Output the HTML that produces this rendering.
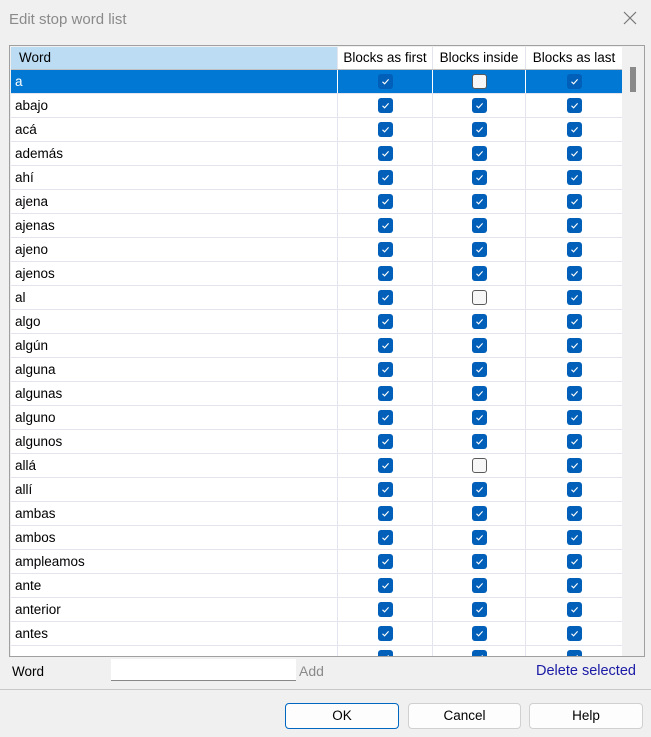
<!DOCTYPE html>
<html><head><meta charset="utf-8"><style>
*{margin:0;padding:0;box-sizing:border-box}
body{width:651px;height:737px;background:#f0f0f0;font-family:"Liberation Sans",sans-serif;font-size:13.5px;color:#000;position:relative;overflow:hidden}
.title{position:absolute;left:9px;top:11px;font-size:15px;color:#8a8a8a}
.close{position:absolute;left:622px;top:10px;width:16px;height:16px}
.frame{position:absolute;left:9px;top:45px;width:636px;height:612px;border:1px solid #a0a0a0;background:#f0f0f0;overflow:hidden}
.grid{position:absolute;left:1px;top:1px;width:611px;height:609px;background:#fff;overflow:hidden}
.row{position:absolute;left:0;width:611px;height:24px;border-bottom:1px solid #e4e4ee}
.row > div{position:absolute;top:0;height:23px;border-right:1px solid #e4e4ee}
.c0{left:0;width:327px;padding-left:4px;line-height:23px}
.c1{left:327px;width:95px}.c2{left:422px;width:93px}.c3{left:515px;width:96px;border-right:none!important}
.cb{position:absolute;left:50%;top:4px;margin-left:-7px;width:15px;height:15px;border-radius:3px;background:#005fb8;display:block}
.cb svg{position:absolute;left:2px;top:2px}
.un{background:#f7f7f7;border:1px solid #5a5a5a}
.hdr{position:absolute;left:0;top:0;width:611px;height:23px;border-bottom:1px solid #c0c0c0}
.hdr div{position:absolute;top:0;height:22px;line-height:22px;text-align:center;border-right:1px solid #e4e4ee;font-size:13.5px}
.sel{background:#0078d4;color:#fff}
.sel > div{border-right-color:#fff!important}
.sb{position:absolute;left:620px;top:21px;width:6px;height:25px;background:#8a8a8a}
.btn{position:absolute;top:703px;height:26px;border:1px solid #d0d0d0;border-radius:4px;background:#fdfdfd;text-align:center;line-height:24px}
</style></head><body>
<div class="title">Edit stop word list</div>
<svg class="close" viewBox="0 0 16 16"><path d="M2 2L14 14M14 2L2 14" stroke="#777" stroke-width="1.2"/></svg>
<div class="frame">
<div class="grid" id="g">
<div class="hdr"><div style="left:0;width:327px;background:#bcdcf4;text-align:left;padding-left:8px">Word</div><div style="left:327px;width:95px">Blocks as first</div><div style="left:422px;width:93px">Blocks inside</div><div style="left:515px;width:96px;border-right:none">Blocks as last</div></div>
</div>
<div class="sb"></div>
</div>
<div style="position:absolute;left:12px;top:664px">Word</div>
<div style="position:absolute;left:111px;top:659px;width:185px;height:22px;background:#fff;border-bottom:1px solid #888"></div>
<div style="position:absolute;left:299px;top:663px;color:#8a8a8a;font-size:14px">Add</div>
<div style="position:absolute;left:536px;top:663px;color:#1a1aa6;font-size:14.5px">Delete selected</div>
<div style="position:absolute;left:0;top:689px;width:651px;border-top:1px solid #c8c8c8"></div>
<div class="btn" style="left:285px;width:114px;border-color:#0067c0">OK</div>
<div class="btn" style="left:408px;width:113px">Cancel</div>
<div class="btn" style="left:529px;width:114px">Help</div>
<script>
var w=["a","abajo","acá","además","ahí","ajena","ajenas","ajeno","ajenos","al","algo","algún","alguna","algunas","alguno","algunos","allá","allí","ambas","ambos","ampleamos","ante","anterior","antes",""];
var un={0:1,9:1,16:1};
var ck='<svg width="11" height="11" viewBox="0 0 11 11"><path d="M2.5 5.8L4.6 7.8L8.6 3.4" fill="none" stroke="#fff" stroke-width="1.1"/></svg>';
var h='';
for(var i=0;i<w.length;i++){
 var cls=i==0?'row sel':'row';
 var c='<span class="cb">'+ck+'</span>';
 var c2=un[i]?'<span class="cb un"></span>':c;
 h+='<div class="'+cls+'" style="top:'+(23+i*24)+'px"><div class="c0">'+w[i]+'</div><div class="c1">'+c+'</div><div class="c2">'+c2+'</div><div class="c3">'+c+'</div></div>';
}
document.getElementById('g').insertAdjacentHTML('beforeend',h);
</script>
</body></html>
